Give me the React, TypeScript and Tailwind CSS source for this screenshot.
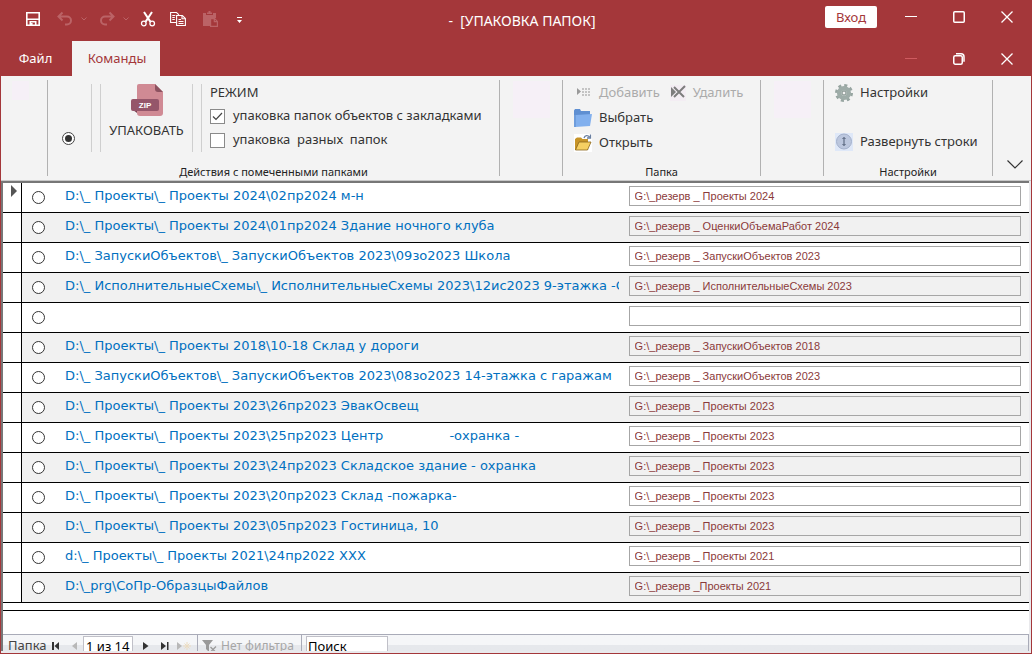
import React from 'react';

const records = [
  { path: 'D:\\_ Проекты\\_ Проекты 2024\\02пр2024 м-н', target: 'G:\\_резерв _ Проекты 2024' },
  { path: 'D:\\_ Проекты\\_ Проекты 2024\\01пр2024 Здание ночного клуба', target: 'G:\\_резерв _ ОценкиОбъемаРабот 2024' },
  { path: 'D:\\_ ЗапускиОбъектов\\_ ЗапускиОбъектов 2023\\09зо2023 Школа', target: 'G:\\_резерв _ ЗапускиОбъектов 2023' },
  { path: 'D:\\_ ИсполнительныеСхемы\\_ ИсполнительныеСхемы 2023\\12ис2023 9-этажка -О', target: 'G:\\_резерв _ ИсполнительныеСхемы 2023' },
  { path: '', target: '' },
  { path: 'D:\\_ Проекты\\_ Проекты 2018\\10-18 Склад у дороги', target: 'G:\\_резерв _ ЗапускиОбъектов 2018' },
  { path: 'D:\\_ ЗапускиОбъектов\\_ ЗапускиОбъектов 2023\\08зо2023 14-этажка с гаражам', target: 'G:\\_резерв _ ЗапускиОбъектов 2023' },
  { path: 'D:\\_ Проекты\\_ Проекты 2023\\26пр2023 ЭвакОсвещ', target: 'G:\\_резерв _ Проекты 2023' },
  { path: 'D:\\_ Проекты\\_ Проекты 2023\\25пр2023 Центр                -охранка -', target: 'G:\\_резерв _ Проекты 2023' },
  { path: 'D:\\_ Проекты\\_ Проекты 2023\\24пр2023 Складское здание - охранка', target: 'G:\\_резерв _ Проекты 2023' },
  { path: 'D:\\_ Проекты\\_ Проекты 2023\\20пр2023 Склад -пожарка-', target: 'G:\\_резерв _ Проекты 2023' },
  { path: 'D:\\_ Проекты\\_ Проекты 2023\\05пр2023 Гостиница, 10', target: 'G:\\_резерв _ Проекты 2023' },
  { path: 'd:\\_ Проекты\\_ Проекты 2021\\24пр2022 ХХХ', target: 'G:\\_резерв _ Проекты 2021' },
  { path: 'D:\\_prg\\СоПр-ОбразцыФайлов', target: 'G:\\_резерв _Проекты 2021' },
];

const MinimizeIcon = () => (
  <svg width="14" height="14" viewBox="0 0 14 14" fill="none" stroke="currentColor">
    <path d="M1 6.500h12" />
  </svg>
);

const MaximizeIcon = () => (
  <svg width="14" height="14" viewBox="0 0 14 14" fill="none" stroke="currentColor" strokeWidth="1.500">
    <rect x="1.750" y="1.750" width="10.500" height="10.500" rx="1" />
  </svg>
);

const RestoreIcon = () => (
  <svg width="14" height="14" viewBox="0 0 14 14" fill="none" stroke="currentColor" strokeWidth="1.500">
    <rect x="1.750" y="3.750" width="8.500" height="8.500" rx="1.500" />
    <path d="M4 1.750h5a3 3 0 0 1 3 3v5" />
  </svg>
);

const CloseIcon = () => (
  <svg width="14" height="14" viewBox="0 0 14 14" fill="none" stroke="currentColor" strokeWidth="1.300">
    <path d="M1.500 1.500l11 11M12.500 1.500l-11 11" />
  </svg>
);

const TinyChevron = () => (
  <svg width="6" height="4" viewBox="0 0 6 4" fill="none" stroke="currentColor">
    <path d="M.5.5L3 3l2.500-2.500" />
  </svg>
);

const UndoIcon = () => (
  <svg width="16" height="16" viewBox="0 0 16 16" fill="none" stroke="currentColor" strokeWidth="2">
    <path d="M5.500 1.500l-4 4 4 4M2 5.500h8a4 4 0 0 1 0 8H8" />
  </svg>
);

/* Quick access toolbar */
const QuickAccess = () => (
  <div className="flex items-center pl-[24px] pb-1 text-white">
    <button aria-label="Сохранить">
      <svg width="16" height="16" viewBox="0 0 16 16" fill="none" stroke="currentColor" strokeWidth="1.600">
        <path d="M1.800 1.800h12.400v12.400H1.800zM2.500 8.300h11M5.300 14v-3.200h5.400V14" />
        <path d="M6.800 12v2" />
      </svg>
    </button>
    <button aria-label="Отменить" className="ml-4 flex items-center gap-2 text-[#bb6366]">
      <UndoIcon />
      <TinyChevron />
    </button>
    <button aria-label="Вернуть" className="ml-3 flex items-center gap-2 text-[#bb6366]">
      <span className="-scale-x-100">
        <UndoIcon />
      </span>
      <TinyChevron />
    </button>
    <button aria-label="Вырезать" className="ml-[11px]">
      <svg width="16" height="16" viewBox="0 0 16 16" fill="none" stroke="currentColor" strokeWidth="1.300">
        <path d="M4 1l6.300 9.600M12 1L5.700 10.600" strokeWidth="2" />
        <circle cx="3.800" cy="12.500" r="2.300" />
        <circle cx="12.200" cy="12.500" r="2.300" />
      </svg>
    </button>
    <button aria-label="Копировать" className="ml-[14px]">
      <svg width="16" height="16" viewBox="0 0 16 16" fill="none" stroke="currentColor" strokeWidth="1.100">
        <path d="M6 11.500H.6V1.500h5.900L9 3.800" />
        <path d="M6.600 4.500h5.800l3 3v7H6.600z" />
        <path d="M12 4.800v3h3M2.300 4.500h3M2.300 6.500h2.500M2.300 8.500h2.500M8.500 8.500h2.500M8.500 10.500h5M8.500 12.500h5" />
      </svg>
    </button>
    <button aria-label="Вставить" className="ml-4 text-[#bb6366]">
      <svg width="16" height="16" viewBox="0 0 16 16">
        <path d="M1 2h3v2h7V2h3v5H8v8H1z" fill="currentColor" />
        <path d="M5 1.500h1.500V0h2v1.500H10V3H5z" fill="currentColor" />
        <path d="M8.600 7.600h4l2.800 2.800v5H8.600zM12.300 7.600v3h3" fill="#a4373a" stroke="currentColor" strokeWidth="1.200" />
      </svg>
    </button>
    <button aria-label="Настройка панели" className="ml-[18px] mt-1">
      <svg width="7" height="7" viewBox="0 0 7 7" fill="currentColor">
        <path d="M1 0h5v1H1zM1 3h5L3.500 6z" />
      </svg>
    </button>
  </div>
);

const TitleBar = () => (
  <header className="bg-[#a4373a] text-sm text-white">
    <div className="grid grid-cols-[1fr_auto_1fr] h-[41px]">
      <QuickAccess />
      <h1 className="flex items-center pl-3 whitespace-pre text-sm">-  [УПАКОВКА ПАПОК]</h1>
      <div className="flex items-center justify-end pb-2">
        <button className="mr-[10px] h-[22px] w-[52px] rounded-xs bg-white text-[13px] leading-5 text-[#a4373a]">Вход</button>
        <button aria-label="Свернуть" className="flex w-12 justify-center"><MinimizeIcon /></button>
        <button aria-label="Развернуть" className="flex w-12 justify-center"><MaximizeIcon /></button>
        <button aria-label="Закрыть" className="flex w-12 justify-center"><CloseIcon /></button>
      </div>
    </div>
    <nav className="flex h-[35px] items-stretch text-[13px]">
      <button className="w-[71px] pr-[2px]">Файл</button>
      <button className="w-[88px] bg-[#f3f3f3] pl-[2px] text-[#a4373a]">Команды</button>
      <div className="ml-auto flex items-center">
        <span className="flex w-12 justify-center text-[#cf5b60]"><MinimizeIcon /></span>
        <button aria-label="Восстановить форму" className="flex w-12 justify-center"><RestoreIcon /></button>
        <button aria-label="Закрыть форму" className="flex w-12 justify-center"><CloseIcon /></button>
      </div>
    </nav>
  </header>
);

const ZipIcon = () => (
  <svg width="32" height="32" viewBox="0 0 32 32">
    <path d="M8 0h16l8 8v21a3 3 0 0 1-3 3H9a3 3 0 0 1-3-3V2a2 2 0 0 1 2-2z" fill="#d08a94" />
    <path d="M24 0l8 8h-5a3 3 0 0 1-3-3z" fill="#8d5260" />
    <path d="M2 26h4v3z" fill="#7a4352" />
    <rect x="0" y="15" width="28" height="12" rx="2" fill="#95566a" />
    <text x="14" y="24" textAnchor="middle" fontSize="8" fontWeight="700" fontFamily="Liberation Sans, sans-serif" fill="#fff">ZIP</text>
  </svg>
);

const AddIcon = () => (
  <svg width="18" height="18" viewBox="0 0 18 18">
    <path d="M3 4l4 3.500L3 11z" fill="#9a9a9a" />
    <path d="M8 5h8M8 8h8M8 11h8" stroke="#c4c4c4" strokeWidth="2" strokeDasharray="2 1" />
  </svg>
);

const DeleteIcon = () => (
  <svg width="16" height="16" viewBox="0 0 16 16" className="bg-[#f3edf3]">
    <path d="M1 2l5 5-5 5z" fill="#7d7d7d" />
    <path d="M4 2l10 10M15 1L4 12" stroke="#7d7d7d" strokeWidth="2" />
  </svg>
);

const FolderIcon = () => (
  <svg width="18" height="18" viewBox="0 0 18 18">
    <path d="M0 1.500L1 0h5l1 2h9v14l-2 1H0z" fill="#5f8fd2" />
    <path d="M2 6l16-1-2 12-15 1z" fill="#82b0ee" />
    <path d="M0 6h2v12H0z" fill="#6f9ddc" />
  </svg>
);

const OpenIcon = () => (
  <svg width="18" height="18" viewBox="0 0 18 18" className="bg-white">
    <path d="M1 5l2-1.500h4L8.500 5H14v11H1z" fill="#c79428" />
    <path d="M5 8h12l-3.500 8H1.500z" fill="#f6cf62" stroke="#8a661c" strokeWidth=".8" />
    <path d="M10 4c1-3 4-3 5.500-1M16.500.5v3.500H13" fill="none" stroke="#6a7fa0" strokeWidth="1.300" />
  </svg>
);

const GearIcon = () => (
  <svg width="18" height="18" viewBox="0 0 18 18">
    <circle cx="9" cy="9" r="7.500" fill="none" stroke="#97a5a1" strokeWidth="3" strokeDasharray="3 2.890" />
    <circle cx="9" cy="9" r="4.800" fill="#e3e8e5" stroke="#9eaca8" strokeWidth="4.500" />
    <circle cx="9" cy="9" r="2" fill="#f3f3f3" stroke="#7c8b87" />
  </svg>
);

const ExpandIcon = () => (
  <svg width="18" height="18" viewBox="0 0 18 18" className="bg-[#dfe8f8]">
    <circle cx="9" cy="8.500" r="7.500" fill="#bcc7de" stroke="#a3b0cb" />
    <path d="M9 4.500v8M7.500 6l1.500-1.500L10.500 6M7.500 11l1.500 1.500 1.500-1.500" fill="none" stroke="#4d5a72" />
  </svg>
);

type CommandProps = { icon: React.ReactNode; label: string; disabled?: boolean };

const Command = ({ icon, label, disabled }: CommandProps) => (
  <button disabled={disabled} className="flex h-[25px] items-center gap-[7px] whitespace-nowrap disabled:text-[#ababab]">
    {icon}
    {label}
  </button>
);

const ModeOption = ({ id, label, checked }: { id: string; label: string; checked?: boolean }) => (
  <div className="flex h-6 items-center gap-2">
    <span className="relative flex">
      <input id={id} type="checkbox" defaultChecked={checked} className="peer size-[15px] appearance-none border border-[#8a8a8a] bg-white" />
      <svg width="15" height="15" viewBox="0 0 15 15" className="pointer-events-none absolute inset-0 hidden peer-checked:block" fill="none" stroke="#444" strokeWidth="1.200">
        <path d="M3 7.500l3 3 6-6.500" />
      </svg>
    </span>
    <label htmlFor={id} className="whitespace-pre">{label}</label>
  </div>
);

const GroupLabel = ({ children }: { children: React.ReactNode }) => (
  <div className="mt-auto text-center text-[11px] leading-[8px] whitespace-nowrap text-[#222]">{children}</div>
);

const Ribbon = () => (
  <section className="flex h-[105px] pt-1 pb-1 text-[13px] text-[#333] bg-[#f3f3f3] border-b border-[#c8c8c8]">
    <div className="w-[47px] shrink-0 border-r border-[#b1b1b1] pl-[11px] pt-px">
      <div className="h-[19px] w-[17px] bg-[#f6f0f7]" />
    </div>

    {/* Pack actions */}
    <div className="flex w-[452px] shrink-0 flex-col border-r border-[#b1b1b1]">
      <div className="flex h-[72px] pt-1">
        <div className="flex w-11 items-end justify-center border-r border-[#cfcfcf] pb-[7px] pr-[2px]">
          <input
            type="radio"
            name="pack-mode"
            aria-label="Отметить все"
            defaultChecked
            className="flex size-[13px] appearance-none items-center justify-center rounded-full border border-[#444] bg-white before:size-[7px] before:rounded-full before:bg-[#333]"
          />
        </div>
        <button className="ml-2 flex w-[93px] flex-col items-center border-x border-[#cfcfcf] text-[13px]">
          <ZipIcon />
          <span className="mt-1 leading-5">УПАКОВАТЬ</span>
        </button>
        <div className="ml-2 flex flex-col border-l border-[#cfcfcf] pl-2">
          <div className="-mt-1 h-6 leading-6">РЕЖИМ</div>
          <ModeOption id="mode-bookmarks" label="упаковка папок объектов с закладками" checked />
          <ModeOption id="mode-various" label="упаковка  разных  папок" />
        </div>
      </div>
      <GroupLabel>Действия с помеченными папками</GroupLabel>
    </div>

    <div className="w-[63px] shrink-0 border-r border-[#b1b1b1] pl-[13px] pt-px">
      <div className="size-[37px] bg-[#f6f0f7]" />
    </div>

    {/* Folder */}
    <div className="flex w-[198px] shrink-0 flex-col border-r border-[#b1b1b1]">
      <div className="flex flex-col items-start pl-[11px]">
        <div className="flex gap-[10px]">
          <Command icon={<AddIcon />} label="Добавить" disabled />
          <Command icon={<DeleteIcon />} label="Удалить" disabled />
        </div>
        <Command icon={<FolderIcon />} label="Выбрать" />
        <Command icon={<OpenIcon />} label="Открыть" />
      </div>
      <GroupLabel>Папка</GroupLabel>
    </div>

    <div className="w-[63px] shrink-0 border-r border-[#b1b1b1] pl-[13px] pt-px">
      <div className="size-[37px] bg-[#f6f0f7]" />
    </div>

    {/* Settings */}
    <div className="flex w-[169px] shrink-0 flex-col border-r border-[#b1b1b1]">
      <div className="flex flex-col items-start gap-6 pl-[11px]">
        <Command icon={<GearIcon />} label="Настройки" />
        <Command icon={<ExpandIcon />} label="Развернуть строки" />
      </div>
      <GroupLabel>Настройки</GroupLabel>
    </div>

    <button aria-label="Свернуть ленту" className="mt-auto ml-auto mr-2 mb-[7px]">
      <svg width="16" height="9" viewBox="0 0 16 9" fill="none" stroke="#333" strokeWidth="1.200">
        <path d="M.5.5L8 8l7.500-7.500" />
      </svg>
    </button>
  </section>
);

const RecordTable = () => (
  <table className="w-full table-fixed border-separate border-spacing-0">
    <colgroup>
      <col className="w-[19px]" />
      <col className="w-[34px]" />
      <col />
      <col className="w-[40%]" />
    </colgroup>
    <tbody>
      {records.map((record, index) => (
        <tr key={index} className="group h-[30px] even:bg-[#f1f1f1]">
          <td className="border-r border-b border-black bg-white p-0 align-top">
            {index === 0 && (
              <svg width="6" height="12" viewBox="0 0 6 12" className="mt-[2px] ml-2" fill="#555">
                <path d="M0 0l6 6-6 6z" />
              </svg>
            )}
          </td>
          <td className="border-b border-black p-0 pl-[10px]">
            <input
              type="radio"
              name={`record-${index}`}
              aria-label={`Пометить папку ${index + 1}`}
              className="block size-[13px] appearance-none rounded-full border border-[#333] bg-white checked:bg-[#333]"
            />
          </td>
          <td className="border-b border-black p-0 pb-[3px] pl-[9px]">
            <div className="overflow-hidden font-['DejaVu_Sans',sans-serif] text-[13px] leading-5 whitespace-pre text-[#0070c0]">{record.path}</div>
          </td>
          <td className="border-b border-black p-0 pb-[3px] pr-2 pl-[10px]">
            <input
              type="text"
              aria-label={`Папка назначения ${index + 1}`}
              defaultValue={record.target}
              className="block h-5 w-full border border-[#a6a6a6] bg-white px-[5px] font-['Liberation_Sans',sans-serif] text-[11px] text-[#8b3a3a] group-even:bg-[#f1f1f1]"
            />
          </td>
        </tr>
      ))}
    </tbody>
  </table>
);

/* Record navigation */
const StatusBar = () => (
  <footer className="h-[17px] shrink-0 overflow-hidden border-t border-r border-[#a9abb8] bg-linear-to-b from-[#f5f6f8] from-60% to-[#e6e8ec] to-60% text-[13px] text-[#444]">
    <div className="flex h-[22px] items-center">
      <span className="w-[49px] pl-[5px]">Папка</span>
      <button aria-label="Первая запись">
        <svg width="8" height="8" viewBox="0 0 8 8" fill="#333"><path d="M0 0h2v8H0zM7 0v8L2.500 4z" /></svg>
      </button>
      <button aria-label="Предыдущая запись" className="ml-3">
        <svg width="6" height="8" viewBox="0 0 6 8" fill="#b8b8b8"><path d="M5 0v8L0 4z" /></svg>
      </button>
      <input
        type="text"
        aria-label="Текущая запись"
        defaultValue="1 из 14"
        className="ml-[5px] h-5 w-[50px] border border-[#c0c0c8] bg-white px-[2px] text-[13px] text-black"
      />
      <button aria-label="Следующая запись" className="ml-[10px]">
        <svg width="6" height="8" viewBox="0 0 6 8" fill="#333"><path d="M0 0v8l5.500-4z" /></svg>
      </button>
      <button aria-label="Последняя запись" className="ml-3">
        <svg width="8" height="8" viewBox="0 0 8 8" fill="#333"><path d="M0 0v8l5-4zM6 0h1.500v8H6z" /></svg>
      </button>
      <button aria-label="Новая запись" className="ml-2 mr-[6px]">
        <svg width="14" height="8" viewBox="0 0 14 8" fill="#b8b8b8">
          <path d="M0 0v8l5-4z" />
          <path d="M10 0v8M6 4h8M7.500 1.500l5 5M12.500 1.500l-5 5" stroke="#ecdcc0" />
        </svg>
      </button>
      <button disabled className="flex h-full w-[105px] items-center gap-1 border-x border-[#a9abb8] pl-[4px] text-xs whitespace-nowrap text-[#a6a6a6]">
        <svg width="15" height="14" viewBox="0 0 15 14" fill="#9a9a9a">
          <path d="M0 1h11L7 6v7L4 10V6z" />
          <path d="M8.500 8l5 5M14 7.500L8.500 13" stroke="#9a9a9a" strokeWidth="1.300" />
        </svg>
        Нет фильтра
      </button>
      <input
        type="search"
        aria-label="Поиск"
        defaultValue="Поиск"
        className="ml-[4px] h-5 w-[82px] border border-[#c0c0c8] bg-white px-px text-[13px] text-black"
      />
    </div>
  </footer>
);

const App = () => {
  return (
    <div className="flex h-screen flex-col overflow-hidden border-x border-b border-[#a4373a] bg-[#e9e9ec] font-['Noto_Sans','Open_Sans',sans-serif]">
      <TitleBar />
      <Ribbon />
      <main className="mr-[2px] mb-[2px] flex min-h-0 flex-1 flex-col border-t-2 border-l-2 border-[#777] bg-white">
        <div className="min-h-0 flex-1 overflow-hidden">
          <RecordTable />
          <div className="h-2 border-b border-black" />
        </div>
        <StatusBar />
      </main>
    </div>
  );
};

export default App;
